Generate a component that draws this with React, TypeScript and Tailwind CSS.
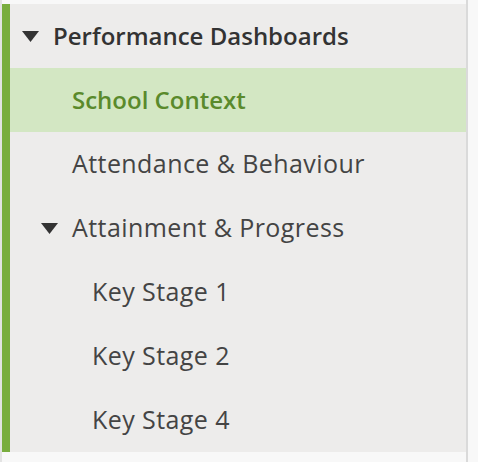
import React from "react";

const Caret = () => (
	<svg width="17" height="11" viewBox="0 0 17 11" className="shrink-0">
		<path d="M0 0 H17 L8.5 11 Z" fill="#333333" />
	</svg>
);

interface Item {
	label: string;
	indent: string;
	caret?: boolean;
	bold?: boolean;
	active?: boolean;
}

const items: Item[] = [
	{ label: "Performance Dashboards", indent: "pl-[12px]", caret: true, bold: true },
	{ label: "School Context", indent: "pl-[62px]", bold: true, active: true },
	{ label: "Attendance & Behaviour", indent: "pl-[62px]" },
	{ label: "Attainment & Progress", indent: "pl-[31px]", caret: true },
	{ label: "Key Stage 1", indent: "pl-[82px]" },
	{ label: "Key Stage 2", indent: "pl-[82px]" },
	{ label: "Key Stage 4", indent: "pl-[82px]" },
];

export default function App() {
	return (
		<div
			className="w-[478px] h-[462px] bg-[#f8f8f8] flex"
			style={{ fontFamily: '"Open Sans", "Noto Sans", sans-serif' }}
		>
			<div className="w-[2px] bg-[#e3e3e3]" />
			<div className="w-[464px] flex flex-col">
				<div className="h-[4px]" />
				<nav className="flex flex-col border-l-8 border-[#79ad3e] bg-[#edeceb]">
					{items.map((item) => (
						<div
							key={item.label}
							className={`h-[64px] flex items-center gap-[14px] ${item.indent} ${
								item.active ? "bg-[#d3e7c3] text-[#5a8a2c]" : item.bold ? "text-[#333333]" : "text-[#444444]"
							} ${item.bold ? "font-semibold text-[24px] tracking-[0px]" : "font-normal text-[25px] tracking-[0.42px]"}`}
						>
							{item.caret && <Caret />}
							<span>{item.label}</span>
						</div>
					))}
				</nav>
			</div>
			<div className="w-[2px] bg-[#dadada]" />
		</div>
	);
}
